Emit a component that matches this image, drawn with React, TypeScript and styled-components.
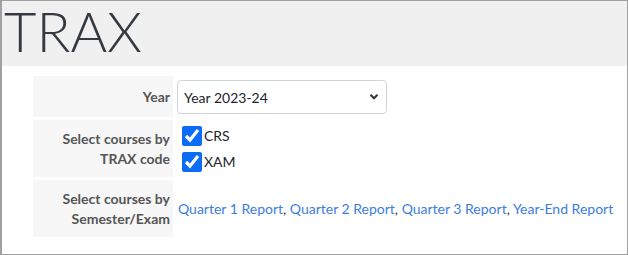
import React, { useState } from 'react';
import styled, { createGlobalStyle } from 'styled-components';

const GlobalStyle = createGlobalStyle`
  html, body {
    margin: 0;
    padding: 0;
    background: #ffffff;
  }
  * {
    box-sizing: border-box;
  }
`;

const Page = styled.div`
  width: 628px;
  height: 255px;
  border: 1px solid #a0a0a0;
  border-left-width: 2px;
  font-family: Lato, 'Liberation Sans', sans-serif;
  color: #333;
  overflow: hidden;
`;

const Header = styled.header`
  height: 65px;
  background: #f0f0f0;
  padding: 0 0 0 2px;
`;

const Title = styled.h1`
  margin: 0;
  font-family: Lato, 'Liberation Sans', sans-serif;
  font-weight: 300;
  font-size: 56px;
  line-height: 60px;
  color: #343a40;
`;

const Form = styled.div`
  display: grid;
  grid-template-columns: 140px auto;
  column-gap: 3px;
  row-gap: 3px;
  width: max-content;
  margin: 10px 0 0 31px;
`;

const Label = styled.div`
  background: #f7f7f7;
  display: flex;
  align-items: center;
  justify-content: flex-end;
  text-align: right;
  padding: 9px 3px 8px 8px;
  font-size: 14px;
  line-height: 20px;
  font-weight: 700;
  color: #555;
`;

const Value = styled.div<{ $pad?: string }>`
  display: flex;
  flex-direction: column;
  justify-content: center;
  padding: ${({ $pad }) => $pad || '0 2px'};
  font-size: 14px;
  color: #333;
`;

const SelectWrap = styled.div`
  position: relative;
  width: 210px;
`;

const Select = styled.select`
  appearance: none;
  width: 210px;
  height: 34px;
  border: 1px solid #ced4da;
  border-radius: 4px;
  background: #fff;
  padding: 0 30px 0 6px;
  font-family: Lato, 'Liberation Sans', sans-serif;
  font-size: 14px;
  color: #212529;
  outline: none;
`;

const Chevron = styled.svg`
  position: absolute;
  right: 8px;
  top: 13px;
  pointer-events: none;
`;

const CheckRow = styled.label`
  display: flex;
  align-items: center;
  height: 26px;
  font-size: 14px;
  color: #212529;
`;

const Check = styled.input`
  width: 20px;
  height: 20px;
  margin: 3px 2px 3px 4px;
  accent-color: #0b6cf5;
`;

const Links = styled.div`
  font-size: 14px;
  color: #333;
  white-space: nowrap;
`;

const Link = styled.a`
  color: #3b7de0;
  text-decoration: none;
`;

const reports = ['Quarter 1 Report', 'Quarter 2 Report', 'Quarter 3 Report', 'Year-End Report'];

export default function App() {
  const [year, setYear] = useState('2023-24');
  const [codes, setCodes] = useState({ CRS: true, XAM: true });

  return (
    <Page>
      <GlobalStyle />
      <Header>
        <Title>TRAX</Title>
      </Header>
      <Form>
        <Label>Year</Label>
        <Value $pad="4px 2px 3px 1px">
          <SelectWrap>
            <Select value={year} onChange={(e) => setYear(e.target.value)}>
              <option value="2023-24">Year 2023-24</option>
              <option value="2022-23">Year 2022-23</option>
            </Select>
            <Chevron width="10" height="8" viewBox="0 0 10 8">
              <path d="M1.5 1.8 L5 5.3 L8.5 1.8" fill="none" stroke="#343a40" strokeWidth="2.2" />
            </Chevron>
          </SelectWrap>
        </Value>

        <Label>
          Select courses by
          <br />
          TRAX code
        </Label>
        <Value $pad="2px 2px">
          {(['CRS', 'XAM'] as const).map((c) => (
            <CheckRow key={c}>
              <Check
                type="checkbox"
                checked={codes[c]}
                onChange={() => setCodes({ ...codes, [c]: !codes[c] })}
              />
              {c}
            </CheckRow>
          ))}
        </Value>

        <Label>
          Select courses by
          <br />
          Semester/Exam
        </Label>
        <Value $pad="8px 2px">
          <Links>
            {reports.map((r, i) => (
              <React.Fragment key={r}>
                <Link href="#">{r}</Link>
                {i < reports.length - 1 ? ', ' : ''}
              </React.Fragment>
            ))}
          </Links>
        </Value>
      </Form>
    </Page>
  );
}
